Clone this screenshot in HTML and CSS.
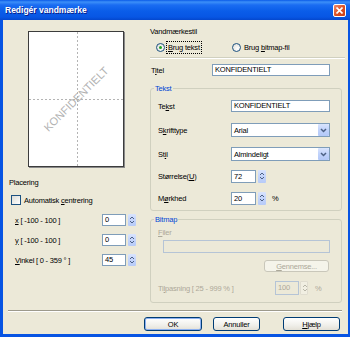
FILE: index.html
```html
<!DOCTYPE html>
<html lang="da">
<head>
  <meta charset="UTF-8" />
  <title>Redigér vandmærke</title>
  <link rel="stylesheet" href="styles.css">
</head>
<body>
  <div class="window">
    <div class="titlebar">
      <span class="title">Redigér vandmærke</span>
      <span class="close">
        <svg width="7" height="7" viewBox="0 0 7 7"><path d="M0.5 0.5 L6.5 6.5 M6.5 0.5 L0.5 6.5" stroke="#fff" stroke-width="1.6" /></svg>
      </span>
    </div>

    <div class="frame">
      <div class="columns">
        <div class="left">
          <div class="preview">
            <span class="wm">KONFIDENTIELT</span>
          </div>
          <div class="placering">Placering</div>
          <div class="check"><span class="box"></span><span>Automatisk <u>c</u>entrering</span></div>
          <div class="pos-rows">
            <span><u>x</u> [ -100 - 100 ]</span>
            <div class="spin"><span class="field">0</span><span class="spinbtn"><svg width="8" height="12" viewBox="0 0 8 12"><path d="M2 5 L4 3 L6 5 M2 7 L4 9 L6 7" fill="none" stroke="#4d6185" stroke-width="1" /></svg></span></div>
            <span><u>y</u> [ -100 - 100 ]</span>
            <div class="spin"><span class="field">0</span><span class="spinbtn"><svg width="8" height="12" viewBox="0 0 8 12"><path d="M2 5 L4 3 L6 5 M2 7 L4 9 L6 7" fill="none" stroke="#4d6185" stroke-width="1" /></svg></span></div>
            <span><u>V</u>inkel [ 0 - 359 ° ]</span>
            <div class="spin"><span class="field">45</span><span class="spinbtn"><svg width="8" height="12" viewBox="0 0 8 12"><path d="M2 5 L4 3 L6 5 M2 7 L4 9 L6 7" fill="none" stroke="#4d6185" stroke-width="1" /></svg></span></div>
          </div>
        </div>

        <div class="right">
          <div class="style-label">Vandmærkestil</div>
          <div class="radios">
            <div class="radio-item"><span class="radio on"></span><span class="focus"><u>B</u>rug tekst</span></div>
            <div class="radio-item"><span class="radio"></span><span>Brug <u>b</u>itmap-fil</span></div>
          </div>
          <div class="rule"></div>
          <div class="title-row">
            <span class="lbl-title">T<u>i</u>tel</span>
            <span class="field wide">KONFIDENTIELT</span>
          </div>

          <fieldset class="group">
            <legend>Tekst</legend>
            <div class="frow">
              <span class="lbl">Te<u>k</u>st</span>
              <span class="field long">KONFIDENTIELT</span>
            </div>
            <div class="frow gap10">
              <span class="lbl">S<u>k</u>rifttype</span>
              <span class="select">Arial<span class="ddbtn"><svg width="11" height="12" viewBox="0 0 11 12"><path d="M3 5 L5.5 7.5 L8 5" fill="none" stroke="#4d6185" stroke-width="1.5" /></svg></span></span>
            </div>
            <div class="frow gap10">
              <span class="lbl">St<u>i</u>l</span>
              <span class="select">Almindeligt<span class="ddbtn"><svg width="11" height="12" viewBox="0 0 11 12"><path d="M3 5 L5.5 7.5 L8 5" fill="none" stroke="#4d6185" stroke-width="1.5" /></svg></span></span>
            </div>
            <div class="frow gap8">
              <span class="lbl">Størrelse(<u>U</u>)</span>
              <div class="spin"><span class="field num">72</span><span class="spinbtn"><svg width="8" height="12" viewBox="0 0 8 12"><path d="M2 5 L4 3 L6 5 M2 7 L4 9 L6 7" fill="none" stroke="#4d6185" stroke-width="1" /></svg></span></div>
            </div>
            <div class="frow gap8">
              <span class="lbl">M<u>ø</u>rkhed</span>
              <div class="spin"><span class="field num">20</span><span class="spinbtn"><svg width="8" height="12" viewBox="0 0 8 12"><path d="M2 5 L4 3 L6 5 M2 7 L4 9 L6 7" fill="none" stroke="#4d6185" stroke-width="1" /></svg></span></div>
              <span class="pct">%</span>
            </div>
          </fieldset>

          <fieldset class="group bitmap">
            <legend>Bitmap</legend>
            <div class="dis filer"><u>F</u>iler</div>
            <span class="field file"></span>
            <div class="browse-row"><span class="btn disabled"><u>G</u>ennemse...</span></div>
            <div class="frow tilpas">
              <span class="lbl dis">Ti<u>l</u>pasning [ 25 - 999 % ]</span>
              <div class="spin off"><span class="field">100</span><span class="spinbtn"><svg width="8" height="12" viewBox="0 0 8 12"><path d="M2 5 L4 3 L6 5 M2 7 L4 9 L6 7" fill="none" stroke="#b8b6a8" stroke-width="1" /></svg></span></div>
              <span class="pct dis">%</span>
            </div>
          </fieldset>
        </div>
      </div>

      <div class="separator"></div>
      <div class="buttons">
        <span class="btn default">OK</span>
        <span class="btn cancel">Annuller</span>
        <span class="btn help"><u>H</u>jælp</span>
      </div>
    </div>
  </div>
</body>
</html>
```

FILE: styles.css
```css
* {
  box-sizing: border-box;
}
body {
  margin: 0;
  font-family: "Liberation Sans", Arial, sans-serif;
  font-size: 7.5px;
  letter-spacing: -0.2px;
  color: #000;
}
u {
  text-decoration-thickness: 1px;
  text-underline-offset: 1px;
}
.window {
  width: 350px;
  height: 337px;
  display: flex;
  flex-direction: column;
}
.titlebar {
  height: 20px;
  display: flex;
  align-items: center;
  justify-content: space-between;
  padding: 0 4px 0 5px;
  background: linear-gradient(to bottom, #0a5ae8 0%, #3c8ff8 10%, #1a6cf2 25%, #0a5de9 55%, #0756e4 85%, #0447cd 100%);
}
.title {
  font-weight: 700;
  font-size: 8.5px;
  letter-spacing: 0;
  color: #fff;
  text-shadow: 1px 1px 0 #0a1e8a;
}
.close {
  width: 13px;
  height: 13px;
  border: 1px solid #fff;
  border-radius: 2px;
  background: linear-gradient(135deg, #ee8b6c, #dc4e22 55%, #c9411a);
  display: flex;
  align-items: center;
  justify-content: center;
}
.frame {
  flex: 1;
  background: #ece9d8;
  border-style: solid;
  border-color: #0754e3;
  border-width: 0 2px 3px 3px;
  display: flex;
  flex-direction: column;
}
.columns {
  display: flex;
}
.left {
  width: 147px;
}
.right {
  width: 195px;
}

/* preview */
.preview {
  width: 96px;
  height: 136px;
  margin: 11px 0 0 25px;
  border: 1px solid #3c3c3c;
  box-shadow: 1px 1px 0 #8a8a8a;
  background-color: #fff;
  background-image: repeating-linear-gradient(to bottom, #b4b4b4 0 2px, transparent 2px 4px), repeating-linear-gradient(to right, #b4b4b4 0 2px, transparent 2px 4px);
  background-size: 1px 100%, 100% 1px;
  background-position: 48px 0, 0 67px;
  background-repeat: no-repeat;
  display: flex;
  align-items: center;
  justify-content: center;
  overflow: hidden;
}
.wm {
  font-size: 11px;
  letter-spacing: 0;
  color: #b2b2b2;
  white-space: nowrap;
  transform: rotate(-45deg);
}
.placering {
  margin: 10px 0 0 6px;
  line-height: 12px;
}
.check {
  display: flex;
  align-items: center;
  height: 12px;
  margin: 5px 0 0 8px;
}
.box {
  width: 10px;
  height: 10px;
  border: 1px solid #1c5180;
  background: linear-gradient(135deg, #dcdcd5, #fff);
  margin-right: 3px;
}
.pos-rows {
  display: grid;
  grid-template-columns: 87px auto;
  grid-auto-rows: 12px;
  row-gap: 8px;
  align-items: center;
  margin-top: 8px;
  padding-left: 12px;
}

/* inputs */
.field {
  display: inline-block;
  height: 12px;
  border: 1px solid #7f9db9;
  background: #fff;
  padding-left: 2px;
  line-height: 10px;
  white-space: nowrap;
}
.spin {
  display: flex;
  gap: 2px;
}
.spin .field {
  width: 24px;
}
.spin .field.num {
  width: 25px;
  height: 13px;
  line-height: 11px;
}
.spinbtn {
  width: 8px;
  height: 12px;
  border-radius: 1px;
  background: linear-gradient(to bottom, #d9e4fd, #c2d3fb 50%, #b7cbf8);
}
.spinbtn svg {
  display: block;
}
.field.num + .spinbtn {
  height: 13px;
}

/* right column */
.style-label {
  margin-top: 6px;
  line-height: 12px;
}
.radios {
  display: grid;
  grid-template-columns: 76px auto;
  height: 12px;
  margin-top: 3px;
  padding-left: 6px;
}
.radio-item {
  display: flex;
  align-items: center;
}
.radio {
  width: 9px;
  height: 9px;
  border: 1px solid #1c5180;
  border-radius: 50%;
  background: radial-gradient(circle at 65% 65%, #fff, #dcdcd5);
  margin-right: 3px;
  display: flex;
  align-items: center;
  justify-content: center;
}
.radio.on::after {
  content: "";
  width: 3px;
  height: 3px;
  border-radius: 50%;
  background: #21a121;
}
.focus {
  outline: 1px dotted #000;
  padding: 0 1px;
  margin-left: -1px;
  line-height: 11px;
}
.rule {
  margin-top: 4px;
  height: 2px;
  border-top: 1px solid #d0d0bf;
  border-bottom: 1px solid #fff;
}
.title-row {
  display: flex;
  align-items: center;
  height: 12px;
  margin-top: 5px;
  padding-left: 1px;
}
.lbl-title {
  width: 61px;
}
.field.wide {
  width: 118px;
}

.group {
  width: 192px;
  margin: 7px 0 0;
  padding: 5px 0 5px;
  border: 1px solid #d0d0bf;
  border-radius: 3px;
}
.group legend {
  color: #0046d5;
  line-height: 11px;
  padding: 0 1px;
  margin-left: 3px;
}
.frow {
  display: flex;
  align-items: center;
  height: 14px;
  padding-left: 7px;
}
.frow.gap10 {
  margin-top: 10px;
}
.frow.gap8 {
  margin-top: 8px;
}
.lbl {
  width: 73px;
}
.field.long {
  width: 99px;
}
.select {
  width: 99px;
  height: 14px;
  border: 1px solid #7f9db9;
  background: #fff;
  padding: 0 0 0 2px;
  display: flex;
  align-items: center;
  justify-content: space-between;
}
.ddbtn {
  width: 11px;
  height: 12px;
  border-radius: 1px;
  background: linear-gradient(to bottom, #dae5fd, #c0d2fb 50%, #b3c8f7);
}
.ddbtn svg {
  display: block;
}
.pct {
  margin-left: 6px;
}

.bitmap {
  margin-top: 3px;
  padding: 2px 0 7px;
}
.dis {
  color: #aca899;
}
.filer {
  line-height: 12px;
  padding-left: 7px;
}
.field.file {
  display: block;
  width: 167px;
  height: 13px;
  margin: 1px 0 0 12px;
  border-color: #b5c4d6;
  background: #ece9d8;
}
.browse-row {
  display: flex;
  justify-content: flex-end;
  margin-top: 7px;
  padding-right: 12px;
}
.tilpas {
  margin-top: 9px;
}
.tilpas .lbl {
  width: 117px;
}
.spin.off {
  gap: 1px;
}
.spin.off .field {
  height: 14px;
  line-height: 12px;
  border-color: #b5c4d6;
  background: #ece9d8;
  color: #aca899;
}
.spin.off .spinbtn {
  height: 14px;
  background: #f1efe2;
  border: 1px solid #e0ddd0;
}
.tilpas .pct {
  margin-left: 7px;
}

/* bottom */
.separator {
  width: 334px;
  height: 2px;
  margin: 7px 0 0 5px;
  border-top: 1px solid #9d9a8c;
  border-bottom: 1px solid #fff;
}
.buttons {
  display: flex;
  margin-top: 5px;
  padding-left: 141px;
}
.btn {
  display: flex;
  align-items: center;
  justify-content: center;
  height: 14px;
  border: 1px solid #003c74;
  border-radius: 3px;
  background: linear-gradient(to bottom, #fff, #f0efea 60%, #e3e0d6);
}
.btn.default {
  width: 58px;
  box-shadow: inset 0 0 0 1px #8cb0f0;
}
.btn.cancel {
  width: 47px;
  margin-left: 11px;
}
.btn.help {
  width: 57px;
  margin-left: 23px;
}
.btn.disabled {
  width: 65px;
  height: 12px;
  border-color: #c9c7ba;
  background: #f5f4ea;
  color: #aca899;
}
```
